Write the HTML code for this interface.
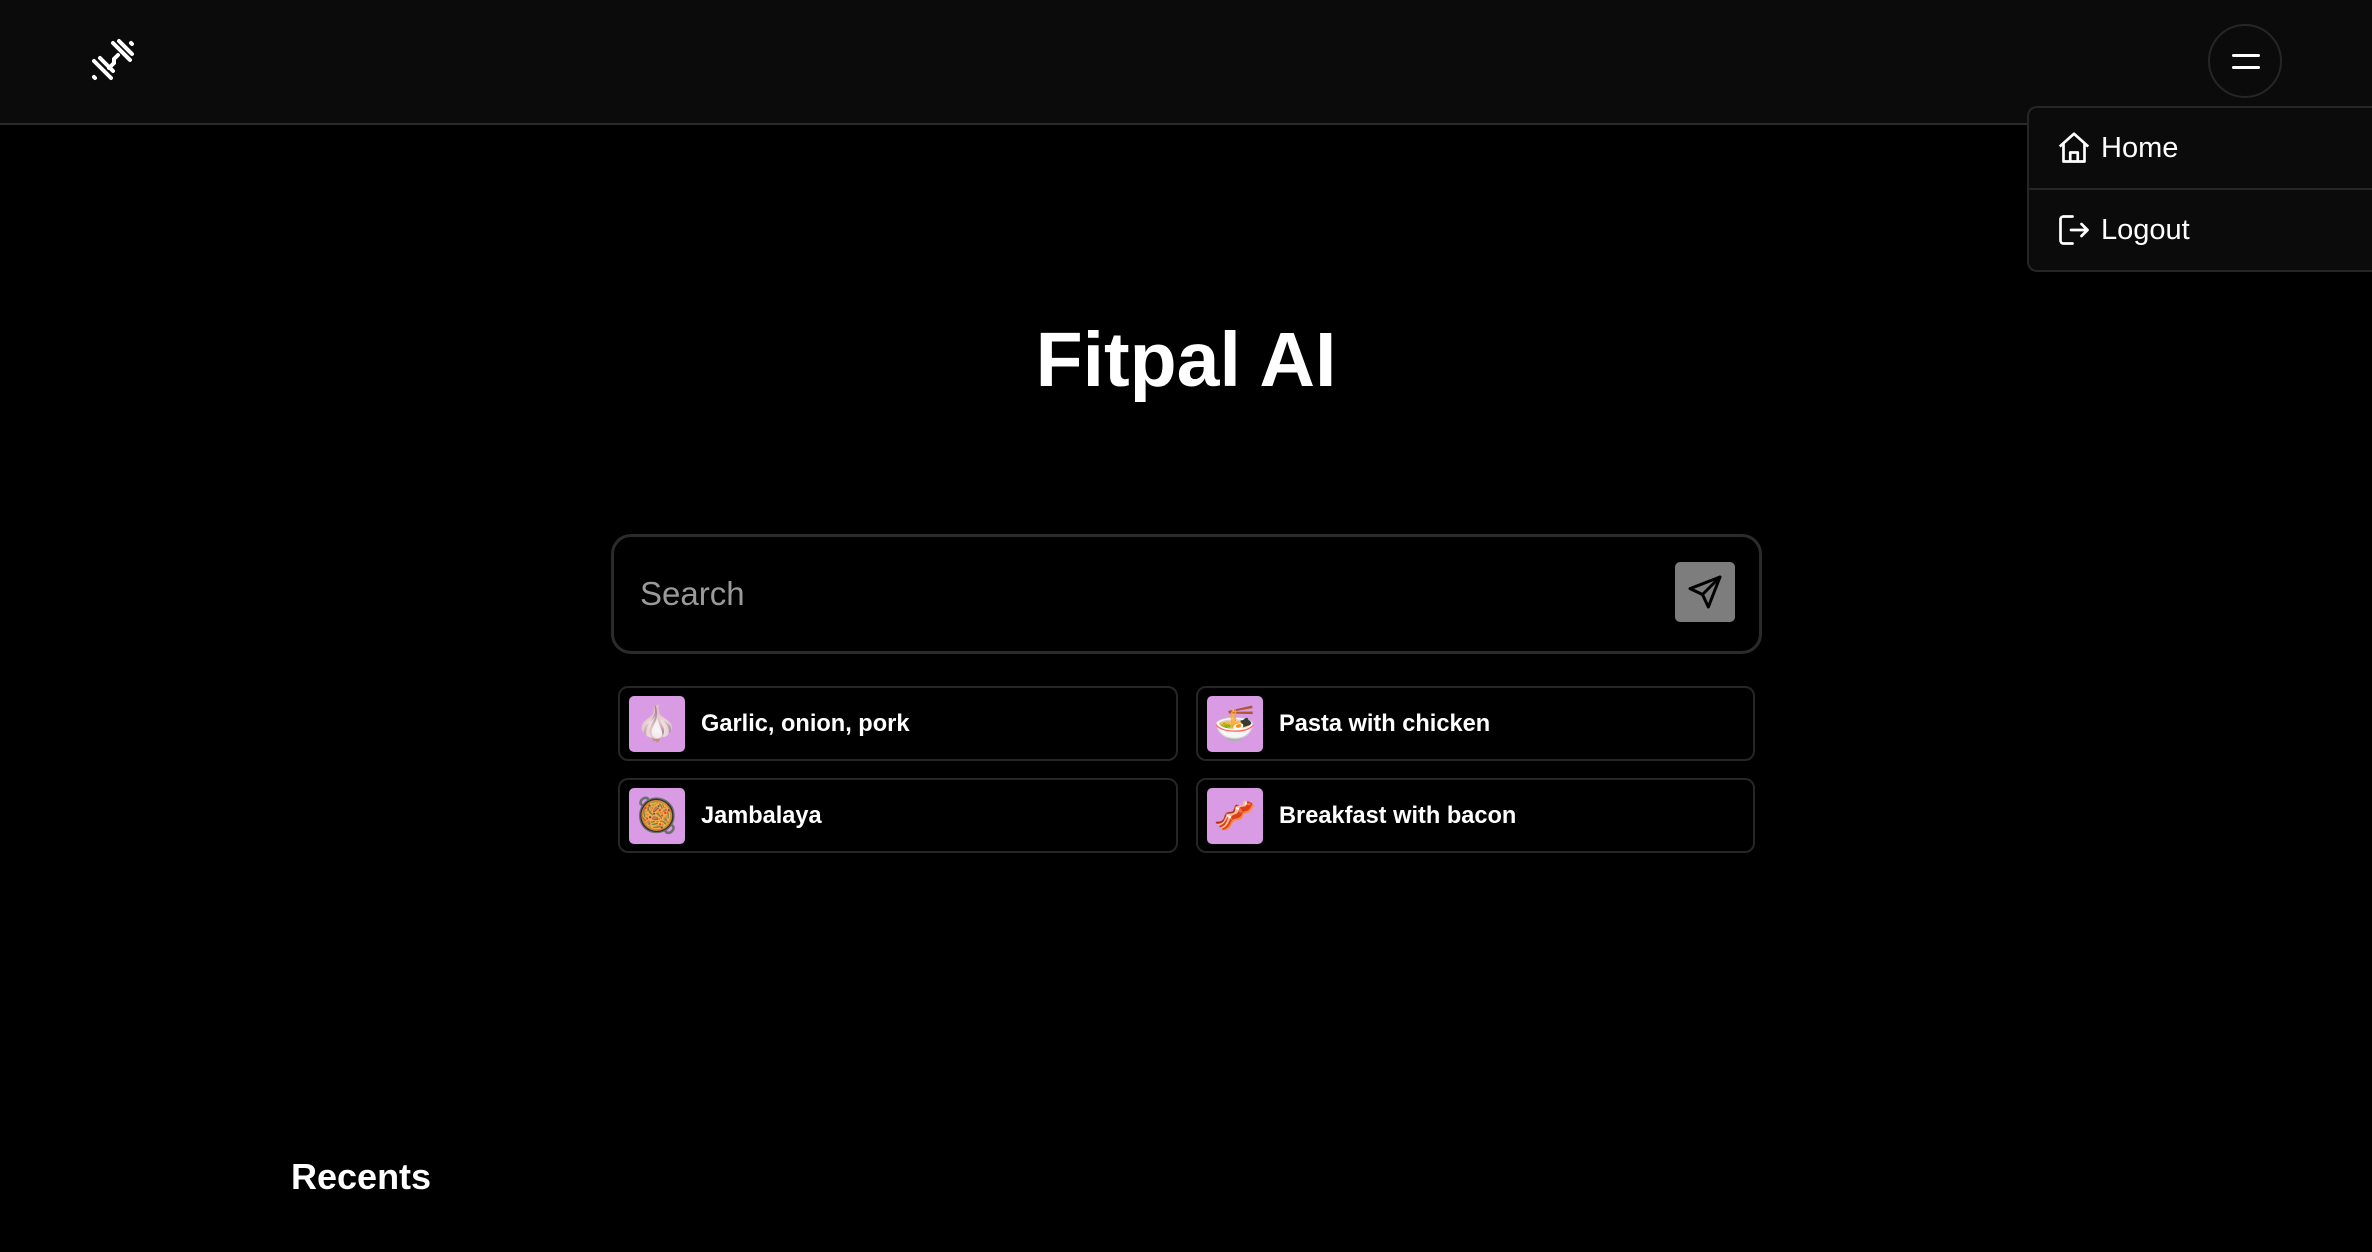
<!DOCTYPE html>
<html><head><meta charset="utf-8"><style>
*{margin:0;padding:0;box-sizing:border-box}
body{width:2372px;height:1252px;background:#000;color:#fff;font-family:"Liberation Sans",sans-serif;position:relative;overflow:hidden}
.hdr{position:absolute;left:0;top:0;width:2372px;height:125px;background:#0b0b0b;border-bottom:2px solid #2a2a2a}
.abs{position:absolute}
.menu{left:2208px;top:24px;width:74px;height:74px;border:2px solid #262626;border-radius:50%}
.menu i{position:absolute;left:22px;width:28px;height:3px;background:#fff;border-radius:2px}
.dd{left:2027px;top:106px;width:370px;height:166px;background:#0b0b0b;border:2px solid #262626;border-radius:10px}
.dd .it{position:absolute;left:0;width:100%;height:82px;font-size:29px}
.dd .it span{position:absolute;left:72px;top:24px}
.title{left:0;width:2372px;top:316px;text-align:center;font-size:77px;font-weight:bold}
.search{left:611px;top:534px;width:1151px;height:120px;border:3px solid #2b2b2b;border-radius:20px}
.search span{position:absolute;left:26px;top:38px;font-size:33px;color:#9a9a9a}
.send{left:1675px;top:562px;width:60px;height:60px;background:#7d7d7d;border-radius:5px}
.chip{position:absolute;height:75px;border:2px solid #262626;border-radius:10px}
.chip .ic{position:absolute;left:9px;top:8px;width:56px;height:56px;background:#d99be4;border-radius:5px;font-size:34px;text-align:center;line-height:56px}
.chip .t{position:absolute;left:81px;top:23px;font-size:23.6px;font-weight:bold}
</style></head><body>
<div class="hdr"></div>
<svg class="abs" style="left:90px;top:38px" width="46" height="46" viewBox="0 0 46 46" stroke="#fff" stroke-width="4" stroke-linecap="round" fill="none">
<line x1="4" y1="23" x2="21" y2="40"/><line x1="10" y1="20" x2="23" y2="33"/><line x1="4" y1="39" x2="5" y2="40"/>
<line x1="23" y1="5" x2="40" y2="22"/><line x1="29" y1="3" x2="42" y2="16"/><line x1="41" y1="5" x2="42" y2="6"/>
<path d="M19 30 L24 25 L24 21 L28 17"/>
</svg>
<div class="abs menu"><i style="top:28px"></i><i style="top:40px"></i></div>
<div class="abs dd">
<div class="it" style="top:0;border-bottom:2px solid #262626">
<svg class="abs" style="left:27px;top:22px" width="36" height="36" viewBox="0 0 24 24" fill="none" stroke="#fff" stroke-width="1.8" stroke-linejoin="round"><path d="M2.5 11 L12 2.5 L21.5 11 M5 9 V21 H19 V9 M9.5 21 V15 H14.5 V21"/></svg>
<span>Home</span></div>
<div class="it" style="top:82px">
<svg class="abs" style="left:27px;top:22px" width="36" height="36" viewBox="0 0 24 24" fill="none" stroke="#fff" stroke-width="1.8" stroke-linecap="round" stroke-linejoin="round"><path d="M11 3 H5 a2 2 0 0 0 -2 2 V19 a2 2 0 0 0 2 2 H11 M10 12 H21 M17 8 L21 12 L17 16"/></svg>
<span>Logout</span></div>
</div>
<div class="abs title">Fitpal AI</div>
<div class="abs search"><span>Search</span></div>
<div class="abs send"><svg style="position:absolute;left:10px;top:10px" width="40" height="40" viewBox="0 0 24 24" fill="none" stroke="#000" stroke-width="1.8" stroke-linejoin="round" stroke-linecap="round"><path d="M21 3 L3 10 L10.5 13.5 L14 21 Z M10.5 13.5 L21 3"/></svg></div>
<div class="chip" style="left:618px;top:686px;width:560px"><div class="ic">🧄</div><div class="t">Garlic, onion, pork</div></div>
<div class="chip" style="left:1196px;top:686px;width:559px"><div class="ic">🍜</div><div class="t">Pasta with chicken</div></div>
<div class="chip" style="left:618px;top:778px;width:560px"><div class="ic">🥘</div><div class="t">Jambalaya</div></div>
<div class="chip" style="left:1196px;top:778px;width:559px"><div class="ic">🥓</div><div class="t">Breakfast with bacon</div></div>
<div class="abs" style="left:291px;top:1156px;font-size:36px;font-weight:bold">Recents</div>
</body></html>
